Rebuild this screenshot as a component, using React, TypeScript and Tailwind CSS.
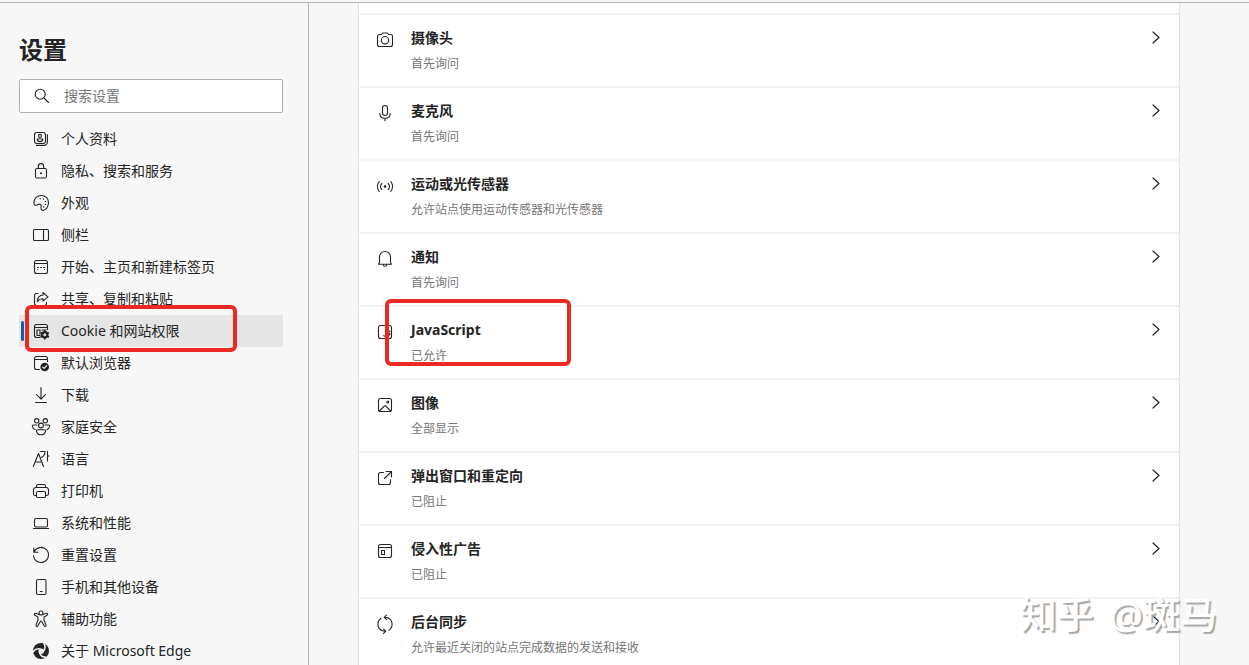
import React from 'react';

interface NavItem {
    label: string;
    icon: React.ReactNode;
    active?: boolean;
}

interface Permission {
    title: string;
    status: string;
    icon: React.ReactNode;
    marked?: boolean;
}

const Icon: React.FC<{ children: React.ReactNode }> = ({ children }) => (
    <svg className="w-4 h-4 shrink-0 overflow-visible" viewBox="0 0 16 16" fill="none" stroke="currentColor" strokeWidth="1.1" strokeLinecap="round" strokeLinejoin="round" aria-hidden="true">
        {children}
    </svg>
);

const SearchIcon = () => <Icon><circle cx="6.2" cy="6.2" r="5" /><path d="M10 10L14.500 14.500" /></Icon>;
const ChevronIcon = () => <Icon><path d="M6 2L12 7.500 6 13" strokeWidth="1.200" /></Icon>;

const ProfileIcon = () => (
    <Icon>
        <rect x="1.500" y="1.500" width="11" height="11" rx="2.400" />
        <circle cx="7" cy="4.900" r="1.500" />
        <path d="M4.300 8h5.400v.6c0 1.300-1.200 2-2.700 2s-2.700-.7-2.700-2z" />
        <path d="M14.400 3.500v7.400a3.500 3.500 0 0 1-3.500 3.500H3.500" />
    </Icon>
);

const LockIcon = () => (
    <Icon>
        <rect x="2.500" y="5.500" width="11" height="9.500" rx="1.500" />
        <path d="M5.300 5.500V3.300a2.700 2.700 0 0 1 5.400 0v2.200" />
        <circle cx="8" cy="10.200" r=".5" fill="currentColor" />
    </Icon>
);

const PaletteIcon = () => (
    <Icon>
        <path d="M.8 8.300C.5 3.500 4.300.5 8.400.5c4 0 7 2.800 7.100 6.700.1 4.300-2.400 7.900-5.300 8.200-1.700.1-2.300-1.100-2.100-2.500.2-1.600.3-3.200-.9-3.700-1.300-.5-2 .3-3.200.9-1.600.8-3-.1-3.200-1.800z" />
        <path d="M7.200 3.800h.01M10.400 4h.01M12.500 6.400h.01M12.500 9.400h.01M10.800 12h.01" strokeWidth="1.400" />
    </Icon>
);

const SidebarIcon = () => <Icon><rect x=".5" y="2.500" width="15" height="11" rx="1.300" /><path d="M10.500 2.500v11" /></Icon>;

const StartIcon = () => (
    <Icon>
        <rect x="1.500" y="1.500" width="13" height="13" rx="2" />
        <path d="M1.500 4.500h13" />
        <path d="M4.500 8.500h1M7.500 8.500h1M10.500 8.500h1M4.500 10.500v.01M11.500 10.500v.01" />
    </Icon>
);

const ShareIcon = () => (
    <Icon>
        <path d="M5 2.500H3.500a2 2 0 0 0-2 2v8a2 2 0 0 0 2 2h8a2 2 0 0 0 2-2v-1" />
        <path d="M10 1.500l5 4.300-5 4.300V7.700C7.500 7.600 5.700 8.400 4.300 10.300 4.600 6.700 6.500 4.300 10 4z" />
    </Icon>
);

const CookieIcon = () => (
    <Icon>
        <path d="M14.500 6.500v-3a2 2 0 0 0-2-2h-9a2 2 0 0 0-2 2v9a2 2 0 0 0 2 2h3.500M1.500 4.500h13" />
        <path d="M7 13V7H4v5.500h3M9 7h4" />
        <circle cx="11.800" cy="11.800" r="2.600" strokeWidth="2.200" />
        <path d="M11.800 7.800v1M11.800 14.800v1M8.300 9.800l.9.500M14.400 13.300l.9.500M8.300 13.800l.9-.5M14.400 10.300l.9-.5" strokeWidth="1.700" />
    </Icon>
);

const BrowserIcon = () => (
    <Icon>
        <path d="M14.500 6.500v-3a2 2 0 0 0-2-2h-9a2 2 0 0 0-2 2v9a2 2 0 0 0 2 2h3M1.500 4.500h13" />
        <circle cx="11.700" cy="12" r="4.300" fill="currentColor" stroke="none" />
        <path d="M9.700 12.100l1.400 1.300 2.600-2.700" stroke="#f7f7f7" />
    </Icon>
);

const DownloadIcon = () => <Icon><path d="M8 .5v11.500M3.500 7.700L8 12.200l4.500-4.500M2.500 15.500h11" /></Icon>;

const FamilyIcon = () => (
    <Icon>
        <circle cx="3.700" cy="1.800" r="2.200" />
        <circle cx="12.300" cy="1.800" r="2.200" />
        <circle cx="8" cy="6.500" r="2.400" />
        <path d="M4 6H.5C-.5 6-.9 6.700-.5 7.700c.4 1.500 1.200 2.500 2.500 2.900M12 6h3.500c1 0 1.400.7 1 1.700-.4 1.500-1.200 2.500-2.500 2.900" />
        <path d="M4.700 10.800h6.600c1 0 1.500.7 1.200 1.700-.6 2-2.200 3.300-4.500 3.300s-3.900-1.300-4.500-3.300c-.3-1 .2-1.700 1.200-1.700z" />
    </Icon>
);

const LanguageIcon = () => (
    <Icon>
        <path d="M.3 15.500L5.500 2.500l5 13M2.200 11h6.500" />
        <path d="M7.500.5H12c0 2.800-1.200 4.700-3.500 6M14.500.5v9.500M14.500 5H16" />
    </Icon>
);

const PrinterIcon = () => (
    <Icon>
        <path d="M3.500 12.500H2.300a1.800 1.800 0 0 1-1.800-1.800V7a2.500 2.500 0 0 1 2.500-2.500h10A2.500 2.500 0 0 1 15.500 7v3.700a1.800 1.800 0 0 1-1.800 1.800h-1.200" />
        <path d="M3.500 4.500V3.200c0-1 .7-1.700 1.700-1.700h5.600c1 0 1.700.7 1.700 1.700v1.300" />
        <rect x="3.500" y="8.500" width="9" height="6" rx="1.200" />
    </Icon>
);

const LaptopIcon = () => <Icon><rect x="1.500" y="3.500" width="13" height="8.500" rx="1.500" /><path d="M.5 13.500h15" /></Icon>;
const ResetIcon = () => <Icon><path d="M.8 1v4.200H5M1 5.200A7.500 7.500 0 1 1 .5 8.500" /></Icon>;
const PhoneIcon = () => <Icon><rect x="3.500" y=".5" width="9.500" height="15" rx="1.500" /><path d="M7.200 12.500h2" /></Icon>;

const AccessibilityIcon = () => (
    <Icon>
        <circle cx="8" cy="2" r="2" />
        <path d="M6 3.500L2.800 2.300C1.300 1.900.8 3.600 2 4.300L5 6v3l-2 5c-.4 1.500 1.300 2.100 1.900.8L7.300 10.500c.3-.6 1.100-.6 1.400 0l2.400 4.300c.6 1.300 2.300.7 1.900-.8L11 9V6l3-1.700c1.200-.7.7-2.400-.8-2L10 3.500" />
    </Icon>
);

const EdgeIcon = () => (
    <svg className="w-4 h-4 shrink-0" viewBox="0 0 16 16" fill="none" aria-hidden="true">
        <circle cx="8" cy="8" r="8" fill="#242424" />
        <circle cx="8.200" cy="8.200" r="2.700" fill="#f7f7f7" />
        <g stroke="#f7f7f7" strokeWidth="1.500">
            <path d="M7.500 6C4.300 5 1.500 6.500-.2 9.500" />
            <path d="M7.500 6C4.300 5 1.500 6.500-.2 9.500" transform="rotate(120 8 8)" />
            <path d="M7.500 6C4.300 5 1.500 6.500-.2 9.500" transform="rotate(240 8 8)" />
        </g>
    </svg>
);

const CameraIcon = () => (
    <Icon>
        <path d="M4.500 2.500L5.700 1h4.600l1.200 1.500h2a2 2 0 0 1 2 2v8a2 2 0 0 1-2 2h-11a2 2 0 0 1-2-2v-8a2 2 0 0 1 2-2z" />
        <circle cx="8" cy="8.200" r="3.700" />
    </Icon>
);

const MicIcon = () => <Icon><rect x="5.500" y=".5" width="5" height="10" rx="2.500" /><path d="M2.800 8.500c0 3 2.200 4.800 5.200 4.800s5.200-1.800 5.200-4.800M8 13.300v2.500" /></Icon>;

const SensorIcon = () => (
    <Icon>
        <circle cx="8" cy="8.500" r=".8" fill="currentColor" />
        <path d="M2.200 3.500c-2.300 2.800-2.300 7.200 0 10M4.800 5.300c-1.500 1.900-1.500 4.500 0 6.400M13.800 3.500c2.300 2.800 2.300 7.200 0 10M11.200 5.300c1.500 1.900 1.500 4.500 0 6.400" />
    </Icon>
);

const BellIcon = () => <Icon><path d="M2.500 11.500V6a5.500 5.500 0 0 1 11 0v5.500l1 1.700h-13zM6 13.500c.3 2.300 3.700 2.300 4 0" /></Icon>;

const ScriptIcon = () => (
    <Icon>
        <rect x="1.500" y="1.500" width="13" height="13" rx="2" />
        <path d="M9 7v4c0 1.600-1.500 1.600-2.200.7M13 7.300c-2-.8-2.500 1.200-1 1.700s1 2.900-1.200 2" />
    </Icon>
);

const PictureIcon = () => (
    <Icon>
        <rect x="1.500" y="1.500" width="13" height="13" rx="2" />
        <circle cx="10.800" cy="5" r="1" />
        <path d="M2.500 14l5-5.200c.4-.4.800-.4 1.200 0l5 5.200" />
    </Icon>
);

const PopupIcon = () => <Icon><path d="M6.500 2.500h-3a2 2 0 0 0-2 2v8a2 2 0 0 0 2 2h8a2 2 0 0 0 2-2v-3M9 1.500h5.500V7M14.500 1.500L7.500 8.500" /></Icon>;

const AdsIcon = () => (
    <Icon>
        <rect x="1.500" y="1.500" width="13" height="13" rx="2" />
        <path d="M1.500 4.500h13M4.500 7.500h3v4h-3z" />
    </Icon>
);

const SyncIcon = () => (
    <Icon>
        <path d="M4 2.200a7.300 7.300 0 0 0 .8 12.400M12 14.300A7.300 7.300 0 0 0 11.200 1.900" />
        <path d="M9.500-.8L7.200 1.300l2.300 2.100M7.200 1.300c1.400 0 2.700.1 4 .6M6.500 13.100l2.300 2.100-2.300 2.100M8.800 15.200c-1.400 0-2.700-.1-4-.6" />
    </Icon>
);

const navItems: NavItem[] = [
    { label: '个人资料', icon: <ProfileIcon /> },
    { label: '隐私、搜索和服务', icon: <LockIcon /> },
    { label: '外观', icon: <PaletteIcon /> },
    { label: '侧栏', icon: <SidebarIcon /> },
    { label: '开始、主页和新建标签页', icon: <StartIcon /> },
    { label: '共享、复制和粘贴', icon: <ShareIcon /> },
    { label: 'Cookie 和网站权限', icon: <CookieIcon />, active: true },
    { label: '默认浏览器', icon: <BrowserIcon /> },
    { label: '下载', icon: <DownloadIcon /> },
    { label: '家庭安全', icon: <FamilyIcon /> },
    { label: '语言', icon: <LanguageIcon /> },
    { label: '打印机', icon: <PrinterIcon /> },
    { label: '系统和性能', icon: <LaptopIcon /> },
    { label: '重置设置', icon: <ResetIcon /> },
    { label: '手机和其他设备', icon: <PhoneIcon /> },
    { label: '辅助功能', icon: <AccessibilityIcon /> },
    { label: '关于 Microsoft Edge', icon: <EdgeIcon /> },
];

const permissions: Permission[] = [
    { title: '摄像头', status: '首先询问', icon: <CameraIcon /> },
    { title: '麦克风', status: '首先询问', icon: <MicIcon /> },
    { title: '运动或光传感器', status: '允许站点使用运动传感器和光传感器', icon: <SensorIcon /> },
    { title: '通知', status: '首先询问', icon: <BellIcon /> },
    { title: 'JavaScript', status: '已允许', icon: <ScriptIcon />, marked: true },
    { title: '图像', status: '全部显示', icon: <PictureIcon /> },
    { title: '弹出窗口和重定向', status: '已阻止', icon: <PopupIcon /> },
    { title: '侵入性广告', status: '已阻止', icon: <AdsIcon /> },
    { title: '后台同步', status: '允许最近关闭的站点完成数据的发送和接收', icon: <SyncIcon /> },
];

const Sidebar: React.FC = () => (
    <aside className="w-[309px] shrink-0 border-r border-[#b4b4b4] pl-[19px] pr-[25px] pt-[31px]">
        <h1 className="text-2xl leading-8 font-bold">设置</h1>
        <label className="mt-[13px] flex h-[34px] items-center gap-[14px] rounded-xs border border-[#b0b0b0] bg-white pl-[14px] pr-3">
            <SearchIcon />
            <input type="text" placeholder="搜索设置" aria-label="搜索设置" className="min-w-0 flex-1 bg-transparent text-sm outline-none placeholder:text-[#767676]" />
        </label>
        <nav className="mt-[10px]">
            {navItems.map(item => (
                <a
                    key={item.label}
                    href="#"
                    aria-current={item.active ? 'page' : undefined}
                    className={item.active
                        ? 'relative z-10 flex h-8 items-center gap-3 bg-[#e5e5e5] px-[14px] text-sm'
                        : 'flex h-8 items-center gap-3 px-[14px] text-sm'}
                >
                    {item.icon}
                    <span>{item.label}</span>
                    {item.active && (
                        <>
                            <span className="absolute left-0.5 top-1.5 h-5 w-[3px] rounded-xs bg-[#0f5fae]" />
                            <span className="absolute -top-2.5 left-1.5 h-[47px] w-[212px] rounded-md border-4 border-[#e92a22]" />
                        </>
                    )}
                </a>
            ))}
        </nav>
    </aside>
);

const PermissionRow: React.FC<{ permission: Permission }> = ({ permission }) => (
    <button type="button" className="relative flex w-full items-start gap-[18px] border-b-2 border-[#f3f3f3] pt-[13px] pb-3 pl-[18px] pr-4 text-left">
        <span className="mt-1">{permission.icon}</span>
        <span className="flex flex-1 flex-col gap-1.5">
            <span className="text-sm leading-5 font-bold">{permission.title}</span>
            <span className="text-xs leading-5 text-[#767676]">{permission.status}</span>
        </span>
        <span className="mt-0.5"><ChevronIcon /></span>
        {permission.marked && <span className="absolute -top-2 left-[26px] h-[67px] w-[186px] rounded-md border-4 border-[#e92a22]" />}
    </button>
);

export default function App() {
    return (
        <div className="relative flex h-screen flex-col overflow-hidden bg-[#f7f7f7] font-['Noto_Sans','Noto_Sans_CJK_SC',sans-serif] text-[#242424]">
            <header className="h-[3px] shrink-0 border-b border-[#b4b4b4]" />
            <div className="flex min-h-0 flex-1">
                <Sidebar />
                <main className="min-w-0 flex-1 overflow-hidden pl-[50px] pr-[70px]">
                    <section className="bg-white shadow-[0_0_2px_rgba(0,0,0,0.25)]">
                        {/* tail of the row scrolled out of view */}
                        <div className="h-3 border-b-2 border-[#f3f3f3]" />
                        {permissions.map(p => <PermissionRow key={p.title} permission={p} />)}
                    </section>
                </main>
            </div>
            <div className="pointer-events-none absolute bottom-6 right-8 flex gap-4 text-[37px] leading-[52px] font-medium whitespace-nowrap text-white font-['Open_Sans','Noto_Sans_CJK_SC',sans-serif] [text-shadow:2px_2px_1px_#a8a8a8]">
                <span>知乎</span>
                <span>@斑马</span>
            </div>
        </div>
    );
}
